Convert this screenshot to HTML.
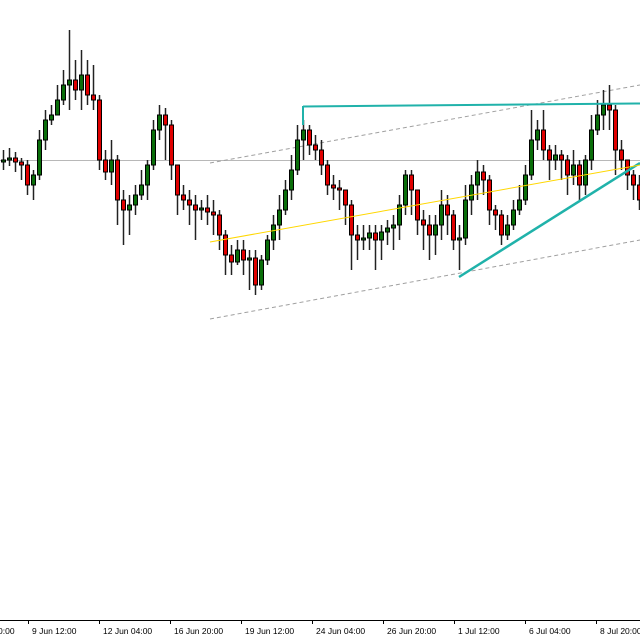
<!DOCTYPE html>
<html><head><meta charset="utf-8"><style>
html,body{margin:0;padding:0;background:#fff;width:640px;height:640px;overflow:hidden}
svg{display:block}
text{font-family:"Liberation Sans",sans-serif;font-size:8.5px;fill:#000}
</style></head><body>
<svg width="640" height="640" xmlns="http://www.w3.org/2000/svg">
<line x1="0" y1="160.5" x2="640" y2="160.5" stroke="#b8b8b8" stroke-width="1"/>
<line x1="210" y1="163" x2="640" y2="85" stroke="#a0a0a0" stroke-dasharray="4,3"/>
<line x1="210" y1="319" x2="640" y2="240" stroke="#a0a0a0" stroke-dasharray="4,3"/>
<path stroke="#222" stroke-width="1.5" fill="none" d="M3.5 150V170M9.5 148V166M15.5 152V172M21.5 158V180M27.5 160V195M33.5 170V200M39.5 130V180M45.5 110V150M51.5 105V125M57.5 85V110M63.5 70V105M69.5 30V110M75.5 60V100M81.5 50V110M87.5 60V105M93.5 65V110M99.5 95V170M105.5 150V180M111.5 140V185M117.5 155V225M123.5 190V245M129.5 195V235M135.5 185V215M141.5 170V200M147.5 160V200M153.5 120V170M159.5 105V140M165.5 108V160M171.5 120V180M177.5 170V215M183.5 185V210M189.5 190V225M195.5 195V240M201.5 200V220M207.5 195V225M213.5 200V235M219.5 210V250M225.5 230V275M231.5 245V275M237.5 240V265M243.5 240V275M249.5 250V290M255.5 250V295M261.5 255V290M267.5 235V265M273.5 215V250M279.5 195V240M285.5 180V215M291.5 155V200M297.5 125V175M303.5 120V160M309.5 125V155M315.5 135V160M321.5 140V175M327.5 160V195M333.5 175V200M339.5 180V210M345.5 195V225M351.5 200V270M357.5 225V260M363.5 225V250M369.5 225V250M375.5 225V270M381.5 225V260M387.5 220V245M393.5 215V250M399.5 195V240M405.5 170V215M411.5 170V215M417.5 190V235M423.5 210V250M429.5 215V260M435.5 215V255M441.5 190V240M447.5 195V235M453.5 210V250M459.5 225V270M465.5 185V245M471.5 175V215M477.5 160V200M483.5 165V195M489.5 175V225M495.5 205V230M501.5 210V245M507.5 215V240M513.5 200V230M519.5 185V215M525.5 165V205M531.5 110V180M537.5 120V150M543.5 110V160M549.5 145V180M555.5 145V170M561.5 150V180M567.5 155V195M573.5 150V185M579.5 160V200M585.5 155V195M591.5 115V170M597.5 100V135M603.5 90V130M609.5 85V130M615.5 105V175M621.5 140V170M627.5 165V190M633.5 170V200M639.5 175V210"/>
<g fill="#0a6e0a" stroke="#000" stroke-width="1">
<rect x="1.5" y="160" width="4" height="2"/><rect x="7.5" y="158" width="4" height="2"/><rect x="31.5" y="175" width="4" height="10"/><rect x="37.5" y="140" width="4" height="35"/><rect x="43.5" y="120" width="4" height="20"/><rect x="49.5" y="115" width="4" height="5"/><rect x="55.5" y="100" width="4" height="15"/><rect x="61.5" y="85" width="4" height="15"/><rect x="67.5" y="80" width="4" height="5"/><rect x="79.5" y="75" width="4" height="15"/><rect x="109.5" y="160" width="4" height="12"/><rect x="127.5" y="205" width="4" height="5"/><rect x="133.5" y="195" width="4" height="10"/><rect x="139.5" y="185" width="4" height="10"/><rect x="145.5" y="165" width="4" height="20"/><rect x="151.5" y="130" width="4" height="35"/><rect x="157.5" y="115" width="4" height="15"/><rect x="199.5" y="208" width="4" height="2"/><rect x="235.5" y="250" width="4" height="12"/><rect x="247.5" y="258" width="4" height="2"/><rect x="259.5" y="260" width="4" height="25"/><rect x="265.5" y="240" width="4" height="20"/><rect x="271.5" y="225" width="4" height="15"/><rect x="277.5" y="210" width="4" height="15"/><rect x="283.5" y="190" width="4" height="20"/><rect x="289.5" y="170" width="4" height="20"/><rect x="295.5" y="140" width="4" height="30"/><rect x="301.5" y="130" width="4" height="10"/><rect x="361.5" y="238" width="4" height="2"/><rect x="367.5" y="233" width="4" height="5"/><rect x="379.5" y="232" width="4" height="8"/><rect x="385.5" y="228" width="4" height="4"/><rect x="391.5" y="225" width="4" height="3"/><rect x="397.5" y="205" width="4" height="20"/><rect x="403.5" y="175" width="4" height="30"/><rect x="433.5" y="225" width="4" height="10"/><rect x="439.5" y="205" width="4" height="20"/><rect x="457.5" y="238" width="4" height="2"/><rect x="463.5" y="200" width="4" height="38"/><rect x="469.5" y="185" width="4" height="15"/><rect x="475.5" y="172" width="4" height="13"/><rect x="505.5" y="225" width="4" height="10"/><rect x="511.5" y="210" width="4" height="15"/><rect x="517.5" y="200" width="4" height="10"/><rect x="523.5" y="175" width="4" height="25"/><rect x="529.5" y="140" width="4" height="35"/><rect x="535.5" y="130" width="4" height="10"/><rect x="553.5" y="155" width="4" height="5"/><rect x="571.5" y="165" width="4" height="10"/><rect x="583.5" y="160" width="4" height="25"/><rect x="589.5" y="130" width="4" height="30"/><rect x="595.5" y="115" width="4" height="15"/><rect x="601.5" y="105" width="4" height="10"/>
</g>
<g fill="#e00000" stroke="#000" stroke-width="1">
<rect x="13.5" y="158" width="4" height="4"/><rect x="19.5" y="162" width="4" height="3"/><rect x="25.5" y="165" width="4" height="20"/><rect x="73.5" y="80" width="4" height="10"/><rect x="85.5" y="75" width="4" height="20"/><rect x="91.5" y="95" width="4" height="5"/><rect x="97.5" y="100" width="4" height="60"/><rect x="103.5" y="160" width="4" height="12"/><rect x="115.5" y="160" width="4" height="40"/><rect x="121.5" y="200" width="4" height="10"/><rect x="163.5" y="115" width="4" height="10"/><rect x="169.5" y="125" width="4" height="40"/><rect x="175.5" y="165" width="4" height="30"/><rect x="181.5" y="195" width="4" height="5"/><rect x="187.5" y="200" width="4" height="5"/><rect x="193.5" y="205" width="4" height="5"/><rect x="205.5" y="208" width="4" height="4"/><rect x="211.5" y="212" width="4" height="3"/><rect x="217.5" y="215" width="4" height="20"/><rect x="223.5" y="235" width="4" height="20"/><rect x="229.5" y="255" width="4" height="7"/><rect x="241.5" y="250" width="4" height="10"/><rect x="253.5" y="258" width="4" height="27"/><rect x="307.5" y="130" width="4" height="15"/><rect x="313.5" y="145" width="4" height="5"/><rect x="319.5" y="150" width="4" height="15"/><rect x="325.5" y="165" width="4" height="20"/><rect x="331.5" y="185" width="4" height="3"/><rect x="337.5" y="188" width="4" height="2"/><rect x="343.5" y="190" width="4" height="15"/><rect x="349.5" y="205" width="4" height="30"/><rect x="355.5" y="235" width="4" height="5"/><rect x="373.5" y="233" width="4" height="7"/><rect x="409.5" y="175" width="4" height="15"/><rect x="415.5" y="190" width="4" height="30"/><rect x="421.5" y="220" width="4" height="5"/><rect x="427.5" y="225" width="4" height="10"/><rect x="445.5" y="205" width="4" height="10"/><rect x="451.5" y="215" width="4" height="25"/><rect x="481.5" y="172" width="4" height="8"/><rect x="487.5" y="180" width="4" height="30"/><rect x="493.5" y="210" width="4" height="5"/><rect x="499.5" y="215" width="4" height="20"/><rect x="541.5" y="130" width="4" height="20"/><rect x="547.5" y="150" width="4" height="10"/><rect x="559.5" y="155" width="4" height="5"/><rect x="565.5" y="160" width="4" height="15"/><rect x="577.5" y="165" width="4" height="20"/><rect x="607.5" y="105" width="4" height="5"/><rect x="613.5" y="110" width="4" height="40"/><rect x="619.5" y="150" width="4" height="10"/><rect x="625.5" y="160" width="4" height="15"/><rect x="631.5" y="175" width="4" height="10"/><rect x="637.5" y="185" width="4" height="15"/>
</g>
<line x1="303" y1="106.5" x2="640" y2="103.5" stroke="#20b2aa" stroke-width="2"/>
<line x1="303" y1="106" x2="303" y2="125" stroke="#20b2aa" stroke-width="2"/>
<line x1="459" y1="277" x2="640" y2="163" stroke="#20b2aa" stroke-width="2.5"/>
<line x1="210" y1="242" x2="640" y2="165" stroke="#ffd700" stroke-width="1"/>
<line x1="0" y1="620.5" x2="640" y2="620.5" stroke="#000"/>
<g stroke="#000">
<line x1="28.5" y1="620" x2="28.5" y2="624"/><line x1="99.5" y1="620" x2="99.5" y2="624"/>
<line x1="170.5" y1="620" x2="170.5" y2="624"/><line x1="241.5" y1="620" x2="241.5" y2="624"/>
<line x1="312.5" y1="620" x2="312.5" y2="624"/><line x1="383.5" y1="620" x2="383.5" y2="624"/>
<line x1="454.5" y1="620" x2="454.5" y2="624"/><line x1="525.5" y1="620" x2="525.5" y2="624"/>
<line x1="596.5" y1="620" x2="596.5" y2="624"/></g>
<text x="-2" y="634">0:00</text>
<text x="32" y="634">9 Jun 12:00</text>
<text x="103" y="634">12 Jun 04:00</text>
<text x="174" y="634">16 Jun 20:00</text>
<text x="245" y="634">19 Jun 12:00</text>
<text x="316" y="634">24 Jun 04:00</text>
<text x="387" y="634">26 Jun 20:00</text>
<text x="458" y="634">1 Jul 12:00</text>
<text x="529" y="634">6 Jul 04:00</text>
<text x="600" y="634">8 Jul 20:00</text>
</svg>
</body></html>
